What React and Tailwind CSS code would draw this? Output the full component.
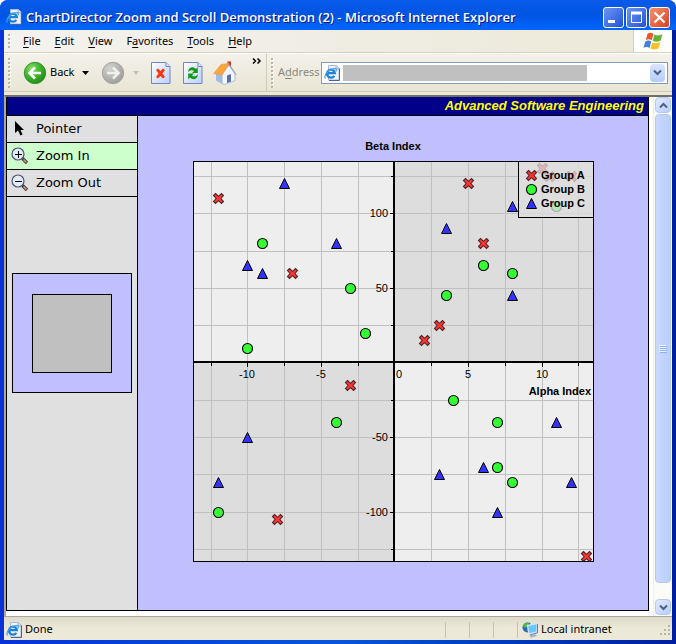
import React from "react";

const GROUP_A = [
  [-12, 110], [-7, 60], [5, 120], [6, 80], [3, 25], [2, 15], [-3, -15],
  [-8, -105], [13, -130], [10, 130], [10.5, 125], [12, 125],
];
const GROUP_B = [
  [-9, 80], [-10, 10], [-3, 50], [-2, 20], [6, 65], [8, 60], [3.5, 45],
  [11, 105], [-4, -40], [-12, -100], [4, -25], [7, -40], [7, -70], [8, -80],
];
const GROUP_C = [
  [-7.5, 120], [-10, 65], [-9, 60], [-4, 80], [3.5, 90], [8, 105], [8, 45],
  [-10, -50], [-12, -80], [3, -75], [6, -70], [7, -100], [11, -40], [12, -80],
];
const X_TICKS = [-12.5, -10, -7.5, -5, -2.5, 2.5, 5, 7.5, 10, 12.5];
const Y_TICKS = [125, 100, 75, 50, 25, -25, -50, -75, -100, -125];

const toX = (v) => Math.floor(202 + v * 14.71);
const toY = (v) => Math.floor(201.95 - v * 1.492);

function Cross({ x, y }) {
  return (
    <path
      transform={`translate(${x + 0.5} ${y + 0.5})`}
      d="M-3-5 0-2.2 3-5 5-3 2.4 0 5 3 3 5 0 2.2-3 5-5 3-2.4 0-5-3Z"
      fill="#ff3333"
      stroke="#4d2626"
      strokeWidth="1.1"
    />
  );
}

function Dot({ x, y }) {
  return <circle cx={x + 0.5} cy={y + 0.5} r="5" fill="#33ff33" stroke="#000" strokeWidth="1.1" />;
}

function Triangle({ x, y }) {
  return (
    <path
      transform={`translate(${x + 0.5} ${y + 0.5})`}
      d="M0-5 5 5H-5Z"
      fill="#3333ff"
      stroke="#000"
      strokeWidth="1"
    />
  );
}

function ScatterChart() {
  return (
    <svg
      width="401"
      height="401"
      viewBox="0 0 401 401"
      role="img"
      aria-label="Scatter chart of Alpha Index against Beta Index"
      className="block shrink-0 font-['Liberation_Sans',Arial,sans-serif] text-[11px]"
    >
      <g shapeRendering="crispEdges">
        <rect width="401" height="401" fill="#eeeeee" />
        <rect x="201" width="200" height="201" fill="#dddddd" />
        <rect y="201" width="201" height="200" fill="#dddddd" />
        {X_TICKS.map((v) => (
          <rect key={v} x={toX(v)} y="0" width="1" height="401" fill="#c0c0c0" />
        ))}
        {Y_TICKS.map((v) => (
          <rect key={v} x="0" y={toY(v)} width="401" height="1" fill="#c0c0c0" />
        ))}
        <rect x="200" width="2" height="401" />
        <rect y="200" width="401" height="2" />
        {X_TICKS.map((v) => (
          <rect key={v} x={toX(v)} y="202" width="1" height={v % 5 ? 3 : 4} />
        ))}
        {Y_TICKS.map((v) => (
          <rect key={v} x={v % 50 ? 198 : 197} y={toY(v)} width="3" height="1" />
        ))}
      </g>
      <g textAnchor="middle">
        <text x="54" y="217">-10</text>
        <text x="128" y="217">-5</text>
        <text x="206" y="217">0</text>
        <text x="275" y="217">5</text>
        <text x="349" y="217">10</text>
      </g>
      <g textAnchor="end">
        <text x="195" y="56">100</text>
        <text x="195" y="131">50</text>
        <text x="195" y="280">-50</text>
        <text x="195" y="355">-100</text>
        <text x="398" y="234" fontWeight="bold">Alpha Index</text>
      </g>
      {GROUP_A.map(([x, y]) => <Cross key={`${x},${y}`} x={toX(x)} y={toY(y)} />)}
      {GROUP_B.map(([x, y]) => <Dot key={`${x},${y}`} x={toX(x)} y={toY(y)} />)}
      {GROUP_C.map(([x, y]) => <Triangle key={`${x},${y}`} x={toX(x)} y={toY(y)} />)}
      <rect x="325.5" y="0.5" width="75" height="56" fill="#dddddd" fillOpacity="0.75" stroke="#000" />
      <Cross x={338} y={14} />
      <Dot x={338} y={28} />
      <Triangle x={338} y={42} />
      <g fontWeight="bold">
        <text x="348" y="18">Group A</text>
        <text x="348" y="32">Group B</text>
        <text x="348" y="46">Group C</text>
      </g>
      <rect x="0.5" y="0.5" width="400" height="400" fill="none" stroke="#000" />
    </svg>
  );
}

function IePage({ className }) {
  return (
    <svg width="16" height="16" viewBox="0 0 16 16" className={className} aria-hidden="true">
      <path d="M4.5.5h8l2.500 2.500v12h-10.500z" fill="#eef3ff" stroke="#a9b8dc" />
      <path d="M15.500 3.500v12H5" fill="none" stroke="#4f5f98" />
      <path d="M12 1v3h3" fill="#cfd9f2" stroke="#8c9cc4" strokeWidth="0.8" />
      <path d="M10.300 10.800A4 4 0 1 1 10.900 8.200H4" fill="none" stroke="#1d83d8" strokeWidth="2.200" />
      <path d="M1.500 13.500C-1 10.500 6 2.500 11.500 3.800c1 .4 1 1.500.4 2.600" fill="none" stroke="#3da2ea" strokeWidth="1.200" />
    </svg>
  );
}

function Grip({ className }) {
  return (
    <svg width="3" height="100%" className={className} aria-hidden="true">
      <defs>
        <pattern id="grip" width="3" height="4" patternUnits="userSpaceOnUse">
          <rect x="1" y="1" width="2" height="2" fill="#fff" />
          <rect width="2" height="2" fill="#b8b5a5" />
        </pattern>
      </defs>
      <rect width="3" height="100%" fill="url(#grip)" />
    </svg>
  );
}

function RoundArrow({ green }) {
  return (
    <svg width="24" height="24" viewBox="0 0 24 24" aria-hidden="true">
      <defs>
        <radialGradient id={green ? "green-ball" : "gray-ball"} cx="0.35" cy="0.3" r="0.75">
          <stop offset="0" stopColor={green ? "#8be070" : "#d4d4d2"} />
          <stop offset="0.5" stopColor={green ? "#42b52e" : "#b8b8b6"} />
          <stop offset="1" stopColor={green ? "#218a15" : "#9b9b99"} />
        </radialGradient>
      </defs>
      <circle
        cx="12"
        cy="12"
        r="10.7"
        fill={green ? "url(#green-ball)" : "url(#gray-ball)"}
        stroke={green ? "#3d9132" : "#a4a4a2"}
      />
      <path
        d={green ? "M18 12H7M12 6.5 6.5 12l5.5 5.5" : "M6 12h11M12 6.5l5.5 5.5-5.5 5.5"}
        fill="none"
        stroke={green ? "#fff" : "#f0f0ee"}
        strokeWidth="2.6"
      />
    </svg>
  );
}

function ToolPage({ children }) {
  return (
    <svg width="20" height="24" viewBox="0 0 20 24" className="block" aria-hidden="true">
      <defs>
        <linearGradient id="sheet" x1="0" y1="0" x2="1" y2="1">
          <stop offset="0" stopColor="#fff" />
          <stop offset="1" stopColor="#b9cffa" />
        </linearGradient>
      </defs>
      <path d="M.5 1.500H15l4 4v17H.5z" fill="url(#sheet)" stroke="#6f86c4" />
      <path d="M15 1.500v4h4" fill="#dfe8fb" stroke="#6f86c4" />
      {children}
    </svg>
  );
}

function HomeIcon() {
  return (
    <svg width="24" height="24" viewBox="0 0 24 24" aria-hidden="true">
      <path d="M14.500.500h3.500v7h-3.500z" fill="#b5382c" />
      <path d="M3 12.500 9 14v9l-6-3.500z" fill="#9dbcec" />
      <path d="M9 13.500 16 4l6 9v6.500L11.500 23.500 9 22.500z" fill="#f1f5fd" stroke="#9fb0d2" strokeWidth="0.8" />
      <path d="M.8 12.500 8 3.500l8-1L9 14z" fill="#fba63c" stroke="#ee9a48" strokeWidth="0.8" />
      <path d="M16 3.500 23 13.500" stroke="#98a4bd" strokeWidth="1.300" />
      <path d="M14 14.500 18 13v7.500L14 22z" fill="#5a70a6" />
    </svg>
  );
}

function WindowsFlag() {
  return (
    <svg width="20" height="19" viewBox="0 0 20 19" aria-hidden="true">
      <path d="M4.500 2C7 .2 8.500.8 10.500 2L8.700 8.300C6.500 7 5 7 2.700 8.200z" fill="#e8592b" />
      <path d="M11.500 2.500c2.500 1.300 5 1.300 8-.2l-1.800 6.200c-3 1.500-5.500 1.500-8 .3z" fill="#66b436" />
      <path d="M2.300 9.500c2.200-1.300 4-1.200 6 0L6.500 16C4.500 14.600 3 14.700.5 15.700z" fill="#3e82dc" />
      <path d="M9.300 10.200c2.500 1.200 5 1.200 8-.2l-1.800 6.400c-3 1.400-5.500 1.400-8 .2z" fill="#f8c12c" />
    </svg>
  );
}

function Magnifier({ plus }) {
  return (
    <svg width="18" height="18" viewBox="0 0 18 18" aria-hidden="true">
      <path d="m11.500 11.500 4.500 4.500" stroke="#40302c" strokeWidth="3.200" />
      <path d="m12.500 12.500 3 3" stroke="#c9a98c" strokeWidth="1.500" />
      <circle cx="7" cy="7" r="6" fill="#e2ecf4" stroke="#50507c" strokeWidth="1.200" />
      <path d={plus ? "M4 7.500h7M7.500 4v7" : "M4 7.500h7"} stroke="#000" />
    </svg>
  );
}

function PointerIcon() {
  return (
    <svg width="18" height="18" viewBox="0 0 18 18" aria-hidden="true">
      <path d="M4 1v12l3-2.500L9.500 15.500l2-1L9.500 10h3.500z" fill="#000" />
    </svg>
  );
}

function IntranetIcon() {
  return (
    <svg width="17" height="16" viewBox="0 0 17 16" aria-hidden="true">
      <circle cx="5.500" cy="5.500" r="5" fill="#2466c4" />
      <path d="M1 4C2 1 5 0 7 1L6 4 3 6zM4 8l3-1v3z" fill="#55bb40" />
      <path d="M5.500 3.500 15 1.500v8.500l-8 2z" fill="#64c8ff" stroke="#d7e2ee" strokeWidth="1.300" />
      <path d="M15.500 2v8.800L8 13" fill="none" stroke="#5f7ba8" />
      <path d="m7 13.500 6-1.500 2 2-6 1.800z" fill="#a7b6ca" />
    </svg>
  );
}

function Chevron({ up }) {
  return (
    <svg width="9" height="7" viewBox="0 0 9 7" aria-hidden="true">
      <path d={up ? "M1 5.500 4.500 2 8 5.500" : "M1 1.500 4.500 5 8 1.500"} fill="none" stroke="#4d6185" strokeWidth="2" />
    </svg>
  );
}

function ScrollButton({ up }) {
  return (
    <button
      type="button"
      aria-label={up ? "Scroll up" : "Scroll down"}
      className="flex h-4 w-4 shrink-0 items-center justify-center rounded-sm border border-[#b3c8f5] bg-linear-to-br from-[#e0e9ff] to-[#b9cefb]"
    >
      <Chevron up={up} />
    </button>
  );
}

function CaptionButton({ label, close, children }) {
  const tone = close ? "from-[#f0906e] to-[#d8401c]" : "from-[#6d96f0] to-[#2250d8]";
  return (
    <button
      type="button"
      aria-label={label}
      className={`h-[21px] w-[21px] rounded-[3px] border border-white bg-linear-to-br ${tone}`}
    >
      <svg width="19" height="19" viewBox="0 0 19 19" className="block" fill="none" stroke="#fff" aria-hidden="true">
        {children}
      </svg>
    </button>
  );
}

const MENUS = [
  ["", "F", "ile"],
  ["", "E", "dit"],
  ["", "V", "iew"],
  ["F", "a", "vorites"],
  ["", "T", "ools"],
  ["", "H", "elp"],
];

function ModeButton({ active, label, children }) {
  return (
    <button
      type="button"
      aria-pressed={Boolean(active)}
      className={`flex h-[27px] w-full items-center gap-[7px] border-b border-black pl-1 font-['DejaVu_Sans',Verdana,sans-serif] text-[13px] ${
        active ? "bg-[#ccffcc]" : "bg-[#e0e0e0]"
      }`}
    >
      {children}
      {label}
    </button>
  );
}

export default function App() {
  return (
    <div className="flex min-h-screen flex-col rounded-t-lg bg-linear-to-r from-[#0831d9] via-[#0855dd] to-[#001ea0] px-1 pb-1 font-['Noto_Sans',Tahoma,sans-serif] text-[11px] text-black">
      <header className="-mx-1 flex h-[30px] shrink-0 items-center rounded-t-lg bg-linear-to-b from-[#0a5be8] via-[#0054e3] to-[#0066ff] px-[6px] pt-1">
        <IePage className="mr-1 shrink-0" />
        <h1 className="grow truncate font-['Open_Sans','Trebuchet_MS',sans-serif] text-[13px] leading-5 font-semibold text-white [text-shadow:1px_1px_0_#0a1883]">
          ChartDirector Zoom and Scroll Demonstration (2) - Microsoft Internet Explorer
        </h1>
        <div className="flex gap-[2px]">
          <CaptionButton label="Minimize">
            <path d="M4 13.500h7" strokeWidth="3" />
          </CaptionButton>
          <CaptionButton label="Maximize">
            <path d="M4.500 5v9.500h10V5" />
            <path d="M4 5h11" strokeWidth="3" />
          </CaptionButton>
          <CaptionButton label="Close" close>
            <path d="m4.500 4.500 10 10m0-10-10 10" strokeWidth="2.200" />
          </CaptionButton>
        </div>
      </header>

      <nav className="flex h-[23px] shrink-0 items-stretch border-b border-[#d8d2bd] bg-linear-to-r from-[#f3f2ee] to-[#ece9d8]">
        <Grip className="ml-1 h-[14px] shrink-0 self-center" />
        <div className="flex grow items-center gap-[14px] pl-3">
          {MENUS.map(([before, key, after]) => (
            <button key={key + after} type="button" className="leading-4">
              {before}
              <span className="underline underline-offset-2">{key}</span>
              {after}
            </button>
          ))}
        </div>
        <div className="flex w-[39px] items-center justify-center border-l border-[#d8d2bd] bg-white">
          <WindowsFlag />
        </div>
      </nav>

      <div className="flex h-[39px] shrink-0 items-stretch border-t border-b border-t-white border-b-[#cdc9b6] bg-linear-to-b from-[#f3f1e9] to-[#e9e6d5]">
        <div className="flex w-[263px] shrink-0 items-center border-r border-[#d0ccb9]">
          <Grip className="mr-3 ml-1 h-[30px] shrink-0" />
          <button type="button" className="flex items-center gap-[3px]">
            <RoundArrow green />
            Back
          </button>
          <svg width="7" height="4" viewBox="0 0 7 4" className="mr-3 ml-2" aria-hidden="true">
            <path d="M0 0h7L3.500 4z" />
          </svg>
          <button type="button" aria-label="Forward">
            <RoundArrow />
          </button>
          <svg width="6" height="4" viewBox="0 0 6 4" className="mr-3 ml-2" aria-hidden="true">
            <path d="M0 0h6L3 4z" fill="#c4c1b1" />
          </svg>
          <div className="flex items-center gap-3">
            <button type="button" aria-label="Stop">
              <ToolPage>
                <path d="m5 9 2-1.500 2.500 2.500L12 7.500 14 9l-2.500 3.500L14 16l-2 1.500L9.500 15 7 17.500 5 16l2.500-3.500z" fill="#f8370c" />
              </ToolPage>
            </button>
            <button type="button" aria-label="Refresh">
              <ToolPage>
                <path d="M5 11c.5-5 5-6 8-3l1.800-2V12H9l2-2C9 8.500 7.500 9 5 11z" fill="#149a14" />
                <path d="M15 13.500c-.5 5-5 6-8 3l-1.800 2v-6H11l-2 2c2 1.500 3.500 1 6-1z" fill="#149a14" />
              </ToolPage>
            </button>
            <button type="button" aria-label="Home" className="-ml-[2px]">
              <HomeIcon />
            </button>
          </div>
          <button type="button" aria-label="More buttons" className="mt-1 mr-1 ml-auto self-start">
            <svg width="10" height="6" viewBox="0 0 10 6" className="block" fill="none" stroke="#000" strokeWidth="1.500" aria-hidden="true">
              <path d="m1 .5 2.500 2.500L1 5.500M5.500.5 8 3 5.500 5.500" />
            </svg>
          </button>
        </div>
        <Grip className="ml-1 h-[30px] shrink-0 self-center" />
        <div className="flex min-w-0 grow items-center gap-px px-1">
          <label htmlFor="address" className="text-[#8a887c]">
            A<span className="underline underline-offset-2">d</span>dress
          </label>
          <div className="flex h-[22px] min-w-0 grow items-center border border-[#7f9db9] bg-white px-[2px]">
            <IePage className="mr-[3px] shrink-0" />
            <input id="address" type="text" className="h-4 w-[244px] min-w-0 bg-[#c0c0c0] outline-none" />
            <button
              type="button"
              aria-label="Address history"
              className="ml-auto flex h-[18px] w-[15px] items-center justify-center rounded-sm bg-linear-to-b from-[#dbe6ff] to-[#b5cbf9]"
            >
              <Chevron />
            </button>
          </div>
        </div>
      </div>

      <div className="h-[3px] shrink-0 bg-[#ece9d8]" />

      <div className="flex grow border-t-2 border-l-2 border-t-[#716f64] border-l-[#aca899] bg-white">
        <main className="mb-[5px] flex min-w-0 grow flex-col border-r border-b border-l border-black">
          <div className="flex h-[19px] items-center justify-end border-b border-black bg-[#000088] pr-1 font-['Liberation_Sans',Arial,sans-serif] text-[13px] leading-4 font-bold text-[#ffff00] italic">
            Advanced Software Engineering
          </div>
          <div className="flex grow">
            <aside className="w-[131px] shrink-0 border-r border-black bg-[#e0e0e0]">
              <ModeButton label="Pointer">
                <PointerIcon />
              </ModeButton>
              <ModeButton label="Zoom In" active>
                <Magnifier plus />
              </ModeButton>
              <ModeButton label="Zoom Out">
                <Magnifier />
              </ModeButton>
              <div className="mx-[5px] mt-[76px] flex h-[120px] items-center justify-center border border-black bg-[#c0c0ff]">
                <div className="h-[79px] w-20 border border-black bg-[#c0c0c0]" />
              </div>
            </aside>
            <section className="flex grow flex-col items-center bg-[#c0c0ff] pt-[22px] pb-12">
              <h2 className="mb-[7px] font-['Liberation_Sans',Arial,sans-serif] text-[11px] leading-4 font-bold">
                Beta Index
              </h2>
              <ScatterChart />
            </section>
          </div>
        </main>
        <div className="ml-1 flex w-[19px] shrink-0 flex-col items-center border-l border-[#eeede5] bg-[#fbfbf8] pb-px">
          <ScrollButton up />
          <div className="mt-px mb-4 flex w-4 grow items-center justify-center rounded-sm border border-[#b3c8f5] bg-linear-to-r from-[#c9d9ff] to-[#bacffc]">
            <svg width="8" height="8" viewBox="0 0 8 8" aria-hidden="true">
              <path d="M0 .5h7m-7 2h7m-7 2h7m-7 2h7" stroke="#eef4fe" />
              <path d="M1 1.500h7m-7 2h7m-7 2h7m-7 2h7" stroke="#8cb0f8" />
            </svg>
          </div>
          <ScrollButton />
        </div>
      </div>

      <footer className="flex h-[24px] shrink-0 items-center border-t border-[#aca899] bg-linear-to-b from-[#dedbca] via-[#ece9d8] to-[#ece9d8] pt-[2px] pl-[2px]">
        <IePage className="mr-[3px] shrink-0" />
        <span>Done</span>
        <div className="ml-auto flex h-4 w-[72px] justify-between">
          <span className="w-6 border-l border-[#c5c2b0]" />
          <span className="w-6 border-l border-[#c5c2b0]" />
          <span className="w-6 border-l border-[#c5c2b0]" />
        </div>
        <div className="flex h-4 w-[155px] items-center gap-[2px] border-l border-[#c5c2b0] pl-1">
          <IntranetIcon />
          Local intranet
          <svg width="12" height="12" viewBox="0 0 12 12" className="mr-px ml-auto" fill="#b8b4a2" aria-hidden="true">
            <path d="M9 1h2v2H9zM5 5h2v2H5zM9 5h2v2H9zM1 9h2v2H1zM5 9h2v2H5zM9 9h2v2H9z" />
          </svg>
        </div>
      </footer>
    </div>
  );
}
